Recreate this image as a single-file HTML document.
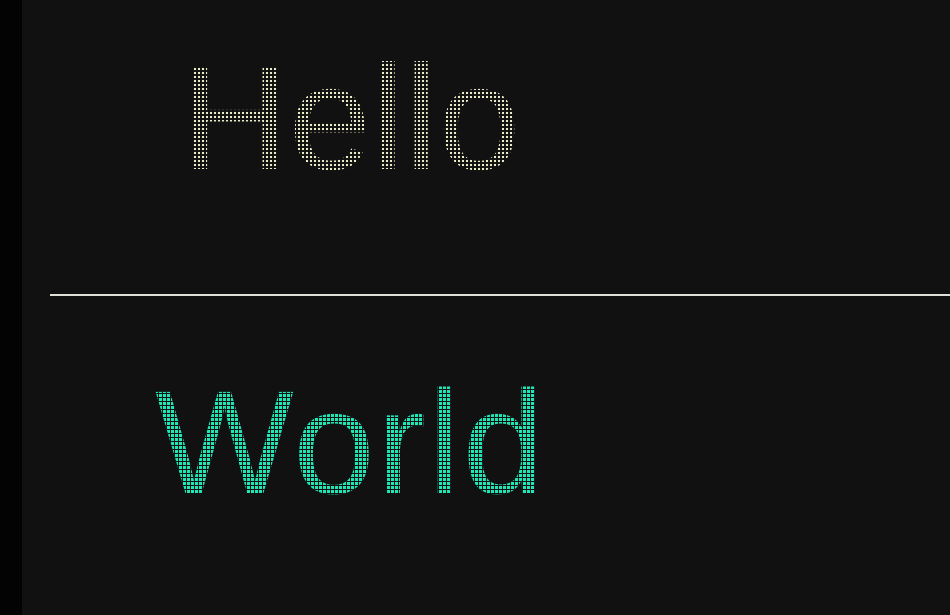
<!DOCTYPE html>
<html><head><meta charset="utf-8"><style>
html,body{margin:0;padding:0}
body{width:950px;height:615px;background:#111;position:relative;overflow:hidden;font-family:"Liberation Sans",sans-serif}
.bar{position:absolute;left:0;top:0;width:22px;height:615px;background:#030303}
.line{position:absolute;left:50px;top:294px;width:900px;height:2px;background:#e0e0d8}
.t{position:absolute;line-height:1;white-space:nowrap;-webkit-background-clip:text;background-clip:text;color:transparent}
.h{left:181px;top:43px;font-size:149px;letter-spacing:0px;
background-image:radial-gradient(circle,#ecebc8 0 1.1px,transparent 1.3px);background-size:4px 4px}
.w{left:155px;top:370px;font-size:147px;letter-spacing:2px;color:#1fe6b5}
.w2{left:155px;top:370px;font-size:147px;letter-spacing:2px;
background-image:linear-gradient(90deg,transparent 0 3px,#111 3px),linear-gradient(transparent 0 3px,#111 3px);background-size:4px 4px}
</style></head><body>
<div class="bar"></div>
<div class="t h">Hello</div>
<div class="line"></div>
<div class="t w">World</div>
<div class="t w2">World</div>
</body></html>
